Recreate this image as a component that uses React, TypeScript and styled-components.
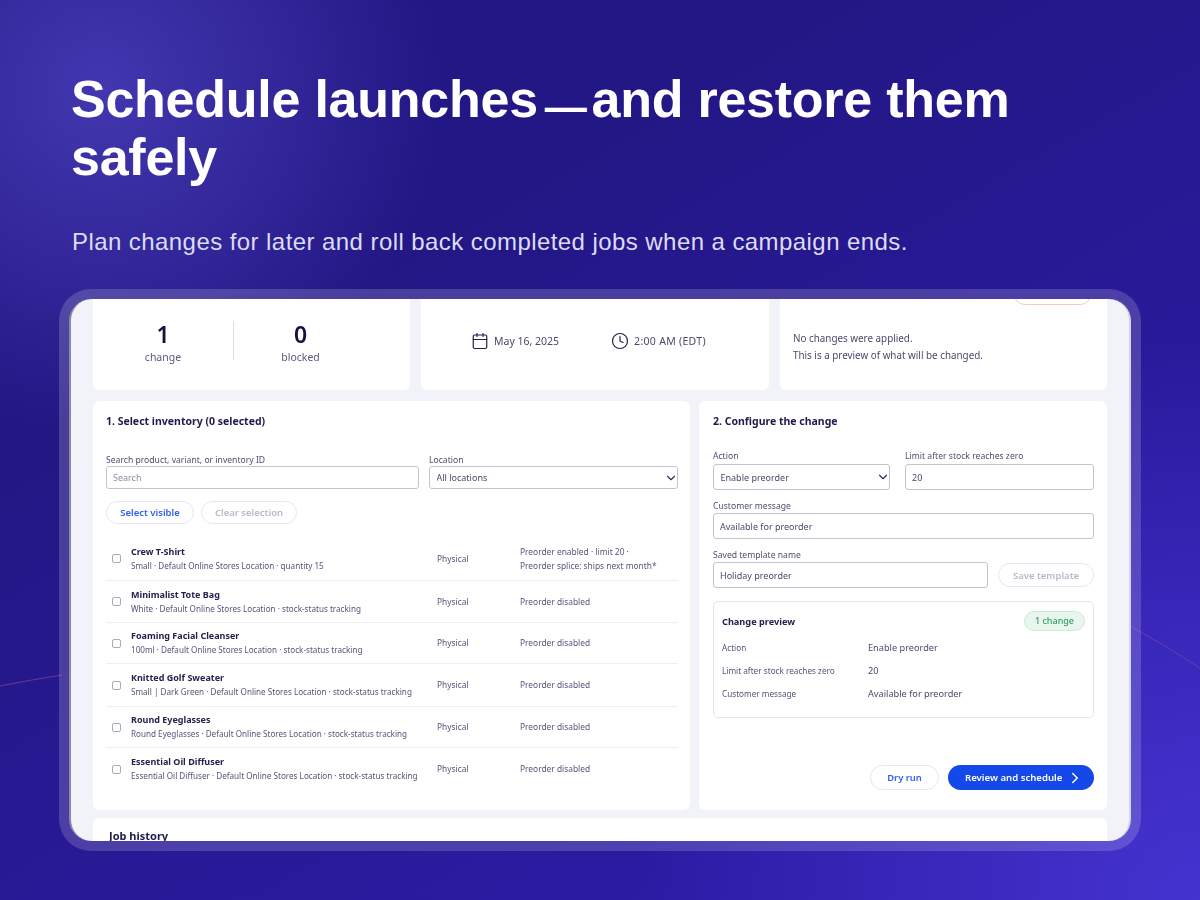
import styled, { createGlobalStyle } from 'styled-components';
import { Calendar, ChevronDown, ChevronRight, Clock } from 'lucide-react';

const GlobalStyle = createGlobalStyle`
  * {
    box-sizing: border-box;
  }

  html,
  body {
    margin: 0;
    padding: 0;
  }

  body {
    width: 1200px;
    height: 900px;
    overflow: hidden;
    font-family: 'Noto Sans', 'Open Sans', sans-serif;
    color: #1d1b4b;
  }
`;

const Page = styled.div`
  position: relative;
  width: 1200px;
  height: 900px;
  overflow: hidden;
  padding: 70px 59px 0;
  background:
    radial-gradient(circle at 100px 90px, #4337b0 0, rgba(67, 55, 176, 0) 340px),
    radial-gradient(circle at 1200px 900px, #4533d0 0, rgba(69, 51, 208, 0) 560px),
    linear-gradient(150deg, #231785 30%, #2c1ba4 82%);
`;

const Lines = styled.svg`
  position: absolute;
  inset: 0;
  pointer-events: none;
`;

const Heading = styled.h1`
  position: relative;
  margin: 0 0 0 12px;
  width: 1000px;
  font-family: 'Liberation Sans', Arial, sans-serif;
  font-size: 52px;
  line-height: 58px;
  font-weight: 700;
  letter-spacing: -0.25px;
  color: #ffffff;
`;

const Dash = styled.span`
  margin: 0 5px 0 7px;
  font-size: 42px;
  line-height: 0;
  vertical-align: -4px;
`;

const Subtitle = styled.p`
  position: relative;
  margin: 41px 0 0 13px;
  font-family: 'Liberation Sans', Arial, sans-serif;
  font-size: 24px;
  line-height: 30px;
  letter-spacing: 0.43px;
  color: #dcdcf6;
`;

const Frame = styled.div`
  position: relative;
  width: 1082px;
  height: 562px;
  margin-top: 32px;
  padding: 10px;
  border-radius: 32px;
  background: rgba(255, 255, 255, 0.17);
`;

const Screen = styled.div`
  width: 100%;
  height: 100%;
  overflow: hidden;
  border-radius: 22px;
  border-left: 2px solid #8a8aa6;
  border-right: 2px solid #d4d4e2;
  background: #f2f3f8;
  filter: blur(0.4px);
`;

const Scroller = styled.div`
  display: flex;
  flex-direction: column;
  gap: 11px;
  margin-top: -30px;
  padding: 0 22px;
`;

const TopRow = styled.div`
  display: grid;
  grid-template-columns: 317px 348px 327px;
  gap: 11px;
`;

const Card = styled.section`
  position: relative;
  border-radius: 6px;
  background: #ffffff;
`;

const TopCard = styled(Card)`
  height: 121px;
  display: flex;
  align-items: flex-end;
`;

const Stats = styled.div`
  display: grid;
  grid-template-columns: 140px 1px 133px;
  align-items: center;
  padding: 0 0 25px 0;
`;

const Stat = styled.div`
  display: flex;
  flex-direction: column;
  align-items: center;
`;

const StatValue = styled.div`
  font-size: 23px;
  line-height: 30px;
  font-weight: 600;
  color: #16143f;
`;

const StatLabel = styled.div`
  font-size: 10.5px;
  line-height: 16px;
  color: #5a5a7c;
`;

const StatDivider = styled.div`
  height: 39px;
  margin-bottom: 4px;
  background: #dedee6;
`;

const Schedule = styled.div`
  display: flex;
  gap: 52px;
  padding: 0 0 40px 50px;
`;

const ScheduleItem = styled.div<{ $tracking?: number }>`
  display: flex;
  align-items: center;
  gap: 5px;
  font-size: 10.5px;
  line-height: 18px;
  letter-spacing: ${(p) => p.$tracking ?? 0}px;
  color: #4a4a6c;

  svg {
    width: 18px;
    height: 18px;
    color: #23214f;
  }
`;

const Notice = styled.div`
  padding: 0 0 26px 13px;
  font-size: 9.85px;
  line-height: 17px;
  color: #4a4a6c;
`;

const StatusPill = styled.div`
  position: absolute;
  top: 0;
  left: 233px;
  width: 79px;
  height: 36px;
  border: 1px solid #f5c9c2;
  border-radius: 12px;
`;

const MainRow = styled.div`
  display: grid;
  grid-template-columns: 597px 408px;
  gap: 9px;
`;

const InventoryCard = styled(Card)`
  height: 409px;
  padding: 13px 12px 0 13px;
`;

const ConfigCard = styled(Card)`
  height: 409px;
  padding: 13px 13px 0 14px;
  display: flex;
  flex-direction: column;
`;

const CardTitle = styled.h2`
  margin: 0;
  font-size: 10.5px;
  line-height: 14px;
  font-weight: 700;
  color: #1d1b4b;
`;

const FilterRow = styled.div`
  display: grid;
  grid-template-columns: 313px 249px;
  gap: 10px;
  margin-top: 26px;
`;

const Field = styled.label`
  display: flex;
  flex-direction: column;
  min-width: 0;
`;

const FieldLabel = styled.span<{ $gap: number }>`
  font-size: 8.6px;
  line-height: 12px;
  margin-bottom: ${(p) => p.$gap}px;
  color: #4d4d70;
`;

const TextInput = styled.input<{ $tall?: boolean }>`
  width: 100%;
  height: ${(p) => (p.$tall ? 26 : 23)}px;
  padding: 0 6px;
  border: 1.5px solid #c4c4cf;
  border-radius: 3px;
  background: #ffffff;
  font-family: inherit;
  font-size: 9px;
  color: #4a4a6c;
  outline: none;

  &::placeholder {
    color: #8c8ca2;
  }
`;

const SelectWrap = styled.div`
  position: relative;

  svg {
    position: absolute;
    top: 50%;
    right: 0;
    width: 14px;
    height: 14px;
    margin-top: -7px;
    color: #33335a;
    pointer-events: none;
  }
`;

const SelectInput = styled.select<{ $tall?: boolean }>`
  display: block;
  width: 100%;
  height: ${(p) => (p.$tall ? 26 : 23)}px;
  padding: 0 6.5px;
  border: 1.5px solid #c4c4cf;
  border-radius: 3px;
  background: #ffffff;
  appearance: none;
  font-family: inherit;
  font-size: 9px;
  color: #4a4a6c;
  outline: none;
`;

const ButtonRow = styled.div`
  display: flex;
  gap: 7px;
  margin-top: 12px;
`;

const PillButton = styled.button<{ $muted?: boolean; $width: number }>`
  width: ${(p) => p.$width}px;
  height: 23px;
  padding: 0;
  border: 1px solid #e6e6ee;
  border-radius: 12px;
  background: #ffffff;
  font-family: inherit;
  font-size: 9.5px;
  font-weight: 600;
  color: ${(p) => (p.$muted ? '#b9b9cc' : '#2f5ff5')};
`;

const Rows = styled.div`
  margin-top: 13px;
`;

const Row = styled.div<{ $height: number }>`
  display: grid;
  grid-template-columns: 25px 306px 83px 1fr;
  align-items: center;
  height: ${(p) => p.$height}px;
  border-bottom: 1px solid #eeeef3;

  &:last-child {
    border-bottom: 0;
  }
`;

const Check = styled.span`
  display: block;
  width: 9px;
  height: 9px;
  margin-left: 6px;
  border: 1px solid #a9a9b8;
  border-radius: 2px;
  background: #ffffff;
`;

const ProductName = styled.div`
  font-size: 9px;
  line-height: 14px;
  font-weight: 700;
  color: #24224f;
`;

const ProductMeta = styled.div`
  font-size: 8.15px;
  line-height: 14px;
  white-space: nowrap;
  color: #55557a;
`;

const Cell = styled.div`
  font-size: 8.4px;
  line-height: 14px;
  white-space: pre-line;
  color: #55557a;
`;

const ConfigGrid = styled.div`
  display: grid;
  grid-template-columns: 177px 189px;
  gap: 15px;
  margin-top: 22px;
`;

const ConfigField = styled(Field)`
  margin-top: 10px;
`;

const TemplateRow = styled.div`
  display: grid;
  grid-template-columns: 275px 96px;
  gap: 10px;
  align-items: end;
  margin-top: 10px;
`;

const SaveButton = styled(PillButton)`
  height: 24px;
  margin-bottom: 1px;
`;

const Preview = styled.div`
  height: 117px;
  margin-top: 13px;
  padding: 9px 8px 0 8px;
  border: 1px solid #e4e4ec;
  border-radius: 5px;
`;

const PreviewHead = styled.div`
  display: flex;
  align-items: center;
  justify-content: space-between;
  height: 20px;
  margin-bottom: 5px;
`;

const PreviewTitle = styled.div`
  font-size: 9.2px;
  font-weight: 700;
  color: #24224f;
`;

const ChangeBadge = styled.div`
  width: 61px;
  height: 20px;
  border: 1px solid #cdebd9;
  border-radius: 10px;
  background: #e8f6ee;
  font-size: 9px;
  line-height: 18px;
  font-weight: 500;
  text-align: center;
  color: #2f9e68;
`;

const PreviewRow = styled.div`
  display: grid;
  grid-template-columns: 146px 1fr;
  align-items: center;
  height: 23px;
`;

const PreviewLabel = styled.div`
  font-size: 8.2px;
  color: #55557a;
`;

const PreviewValue = styled.div`
  font-size: 9.2px;
  color: #4a4a6c;
`;

const Actions = styled.div`
  display: flex;
  justify-content: flex-end;
  gap: 9px;
  margin-top: 47px;
`;

const DryRun = styled(PillButton)`
  height: 25px;
  border-radius: 13px;
  font-size: 9.4px;
`;

const PrimaryButton = styled.button`
  display: flex;
  align-items: center;
  gap: 4px;
  width: 146px;
  height: 25px;
  padding: 0 0 0 17px;
  border: 0;
  border-radius: 13px;
  background: #1448e8;
  font-family: inherit;
  font-size: 9.6px;
  font-weight: 600;
  color: #ffffff;

  svg {
    width: 18px;
    height: 18px;
  }
`;

const HistoryCard = styled(Card)`
  height: 60px;
  margin-top: -3px;
  padding: 11px 16px;
`;

const HistoryTitle = styled.div`
  font-size: 11px;
  line-height: 14px;
  font-weight: 700;
  color: #1d1b4b;
`;

const products = [
  {
    name: 'Crew T-Shirt',
    meta: 'Small · Default Online Stores Location · quantity 15',
    status: 'Preorder enabled  · limit 20 ·\nPreorder splice: ships next month*',
    height: 44,
  },
  {
    name: 'Minimalist Tote Bag',
    meta: 'White · Default Online Stores Location · stock-status tracking',
    status: 'Preorder disabled',
    height: 42,
  },
  {
    name: 'Foaming Facial Cleanser',
    meta: '100ml · Default Online Stores Location · stock-status tracking',
    status: 'Preorder disabled',
    height: 41,
  },
  {
    name: 'Knitted Golf Sweater',
    meta: 'Small | Dark Green · Default Online Stores Location · stock-status tracking',
    status: 'Preorder disabled',
    height: 43,
  },
  {
    name: 'Round Eyeglasses',
    meta: 'Round Eyeglasses · Default Online Stores Location · stock-status tracking',
    status: 'Preorder disabled',
    height: 41,
  },
  {
    name: 'Essential Oil Diffuser',
    meta: 'Essential Oil Diffuser · Default Online Stores Location · stock-status tracking',
    status: 'Preorder disabled',
    height: 42,
  },
];

const previewRows = [
  { label: 'Action', value: 'Enable preorder' },
  { label: 'Limit after stock reaches zero', value: '20' },
  { label: 'Customer message', value: 'Available for preorder' },
];

function App() {
  return (
    <Page>
      <GlobalStyle />

      <Lines width='1200' height='900' viewBox='0 0 1200 900' fill='none'>
        <path d='M0 686 Q30 680 62 675' stroke='#a0568f' strokeOpacity='0.55' />
        <path d='M1130 626 Q1165 645 1200 668' stroke='#a0568f' strokeOpacity='0.45' />
      </Lines>

      <Heading>
        Schedule launches<Dash>—</Dash>and restore them
        <br />
        safely
      </Heading>
      <Subtitle>Plan changes for later and roll back completed jobs when a campaign ends.</Subtitle>

      <Frame>
        <Screen>
          <Scroller>
            <TopRow>
              <TopCard>
                <Stats>
                  <Stat>
                    <StatValue>1</StatValue>
                    <StatLabel>change</StatLabel>
                  </Stat>
                  <StatDivider />
                  <Stat>
                    <StatValue>0</StatValue>
                    <StatLabel>blocked</StatLabel>
                  </Stat>
                </Stats>
              </TopCard>
              <TopCard>
                <Schedule>
                  <ScheduleItem>
                    <Calendar strokeWidth={1.6} />
                    May 16, 2025
                  </ScheduleItem>
                  <ScheduleItem $tracking={0.3}>
                    <Clock strokeWidth={1.6} />
                    2:00 AM (EDT)
                  </ScheduleItem>
                </Schedule>
              </TopCard>
              <TopCard>
                <StatusPill />
                <Notice>
                  No changes were applied.
                  <br />
                  This is a preview of what will be changed.
                </Notice>
              </TopCard>
            </TopRow>

            <MainRow>
              <InventoryCard>
                <CardTitle>1. Select inventory (0 selected)</CardTitle>
                <FilterRow>
                  <Field>
                    <FieldLabel $gap={0}>Search product, variant, or inventory ID</FieldLabel>
                    <TextInput placeholder='Search' />
                  </Field>
                  <Field>
                    <FieldLabel $gap={0}>Location</FieldLabel>
                    <SelectWrap>
                      <SelectInput defaultValue='all'>
                        <option value='all'>All locations</option>
                      </SelectInput>
                      <ChevronDown strokeWidth={2} />
                    </SelectWrap>
                  </Field>
                </FilterRow>
                <ButtonRow>
                  <PillButton $width={88}>Select visible</PillButton>
                  <PillButton $width={96} $muted>
                    Clear selection
                  </PillButton>
                </ButtonRow>
                <Rows>
                  {products.map((product) => (
                    <Row key={product.name} $height={product.height}>
                      <Check />
                      <div>
                        <ProductName>{product.name}</ProductName>
                        <ProductMeta>{product.meta}</ProductMeta>
                      </div>
                      <Cell>Physical</Cell>
                      <Cell>{product.status}</Cell>
                    </Row>
                  ))}
                </Rows>
              </InventoryCard>

              <ConfigCard>
                <CardTitle>2. Configure the change</CardTitle>
                <ConfigGrid>
                  <Field>
                    <FieldLabel $gap={2}>Action</FieldLabel>
                    <SelectWrap>
                      <SelectInput $tall defaultValue='enable'>
                        <option value='enable'>Enable preorder</option>
                      </SelectInput>
                      <ChevronDown strokeWidth={2} />
                    </SelectWrap>
                  </Field>
                  <Field>
                    <FieldLabel $gap={2}>Limit after stock reaches zero</FieldLabel>
                    <TextInput $tall defaultValue='20' />
                  </Field>
                </ConfigGrid>
                <ConfigField>
                  <FieldLabel $gap={1}>Customer message</FieldLabel>
                  <TextInput $tall defaultValue='Available for preorder' />
                </ConfigField>
                <TemplateRow>
                  <Field>
                    <FieldLabel $gap={1}>Saved template name</FieldLabel>
                    <TextInput $tall defaultValue='Holiday preorder' />
                  </Field>
                  <SaveButton $width={96} $muted>
                    Save template
                  </SaveButton>
                </TemplateRow>
                <Preview>
                  <PreviewHead>
                    <PreviewTitle>Change preview</PreviewTitle>
                    <ChangeBadge>1 change</ChangeBadge>
                  </PreviewHead>
                  {previewRows.map((row) => (
                    <PreviewRow key={row.label}>
                      <PreviewLabel>{row.label}</PreviewLabel>
                      <PreviewValue>{row.value}</PreviewValue>
                    </PreviewRow>
                  ))}
                </Preview>
                <Actions>
                  <DryRun $width={69}>Dry run</DryRun>
                  <PrimaryButton>
                    Review and schedule
                    <ChevronRight strokeWidth={2} />
                  </PrimaryButton>
                </Actions>
              </ConfigCard>
            </MainRow>

            <HistoryCard>
              <HistoryTitle>Job history</HistoryTitle>
            </HistoryCard>
          </Scroller>
        </Screen>
      </Frame>
    </Page>
  );
}

export default App;
